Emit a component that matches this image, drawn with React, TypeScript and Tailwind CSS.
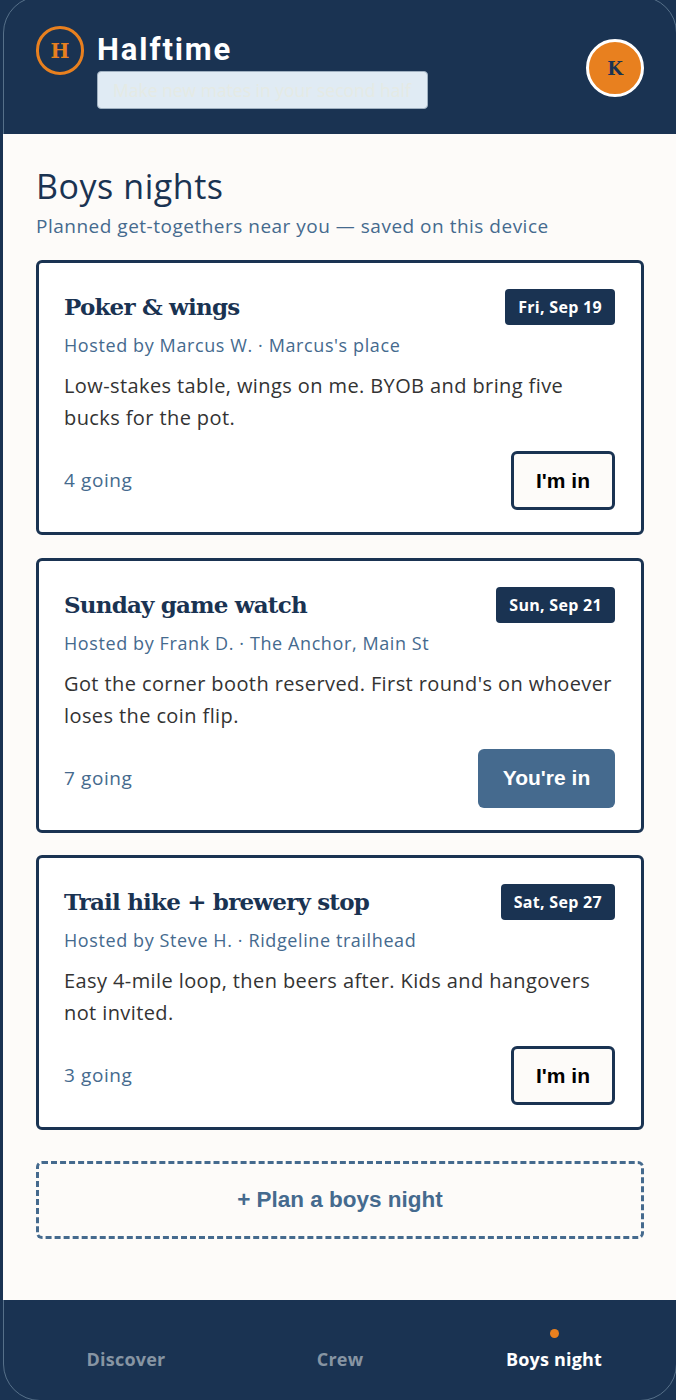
const events = [
  {
    title: "Poker & wings",
    date: "Fri, Sep 19",
    meta: "Hosted by Marcus W. · Marcus's place",
    body: "Low-stakes table, wings on me. BYOB and bring five bucks for the pot.",
    going: "4 going",
    joined: false,
  },
  {
    title: "Sunday game watch",
    date: "Sun, Sep 21",
    meta: "Hosted by Frank D. · The Anchor, Main St",
    body: "Got the corner booth reserved. First round's on whoever loses the coin flip.",
    going: "7 going",
    joined: true,
  },
  {
    title: "Trail hike + brewery stop",
    date: "Sat, Sep 27",
    meta: "Hosted by Steve H. · Ridgeline trailhead",
    body: "Easy 4-mile loop, then beers after. Kids and hangovers not invited.",
    going: "3 going",
    joined: false,
  },
];

function EventCard({ event }: { event: (typeof events)[number] }) {
  return (
    <div className="h-[275px] rounded-md border-[3px] border-[#1a3352] bg-white pt-[26px] pr-[26px] pl-[25px]">
      <div className="flex items-start justify-between">
        <h2 className="font-['DejaVu_Serif'] text-[23px] leading-9 font-bold tracking-[-0.8px] text-[#1a3352]">
          {event.title}
        </h2>
        <span className="rounded bg-[#1a3352] px-[13px] py-[7px] font-['Open_Sans'] text-[16px] leading-[22px] font-bold tracking-[0.3px] text-white">
          {event.date}
        </span>
      </div>
      <p className="mt-[6px] text-[18px] leading-[28px] tracking-[0.6px] text-[#456a8e]">{event.meta}</p>
      <p className="mt-[11px] text-[20px] leading-8 tracking-[0.4px] text-[#333333]">{event.body}</p>
      <div className="mt-[17px] flex items-center justify-between">
        <span className="text-[19px] font-medium tracking-[0.6px] text-[#456a8e]">{event.going}</span>
        {event.joined ? (
          <button className="h-[59px] w-[137px] rounded-md bg-[#456a8e] font-['Liberation_Sans'] text-[21px] font-bold text-white">
            You're in
          </button>
        ) : (
          <button className="h-[59px] w-[104px] rounded-md border-[3px] border-[#1a3352] bg-[#fdfbf9] font-['Liberation_Sans'] text-[21px] font-bold text-black">
            I'm in
          </button>
        )}
      </div>
    </div>
  );
}

export default function App() {
  return (
    <div className="relative flex h-[1400px] w-[676px] flex-col overflow-hidden bg-[#1a3352] pl-[3px] font-['Open_Sans',sans-serif]">
      {/* device outline, only the corners show */}
      <div className="absolute -top-1 -right-px -bottom-px left-[3px] rounded-[37px] border border-[#567089]" />
      <header className="relative -ml-[3px] flex h-[134px] shrink-0 justify-between pr-8 pl-9">
        <div className="flex items-start gap-[13px] pt-[26px]">
          <div className="flex h-[49px] w-[48px] items-center justify-center rounded-full border-[3px] border-[#e8801f] font-['DejaVu_Serif'] text-[20px] font-bold text-[#e8801f]">
            H
          </div>
          <div>
            <h1 className="-mb-[2px] font-['Roboto'] text-[31px] leading-[47px] font-bold tracking-[1.9px] text-white">Halftime</h1>
            <div className="flex h-[38px] w-[331px] items-center truncate rounded border border-[#9fb0c0] bg-[#e0ebf4] pl-[15px] text-[17.5px] text-[#e5eae4]">
              Make new mates in your second half
            </div>
          </div>
        </div>
        <div className="mt-[39px] flex h-[58px] w-[58px] items-center justify-center rounded-full border-[3px] border-white bg-[#e8801f] font-['DejaVu_Serif'] text-[18px] font-bold text-[#1a3352]">
          K
        </div>
      </header>
      <main className="relative flex-1 bg-[#fdfbf9] pt-[29px] pr-8 pl-[33px]">
        <h1 className="text-[34px] leading-[46px] tracking-[0.55px] text-[#1a3352]">Boys nights</h1>
        <p className="mt-[2px] text-[19px] leading-[30px] tracking-[0.5px] text-[#456a8e]">
          Planned get-togethers near you — saved on this device
        </p>
        <div className="mt-[19px] flex flex-col gap-[22.5px]">
          {events.map((event) => (
            <EventCard key={event.title} event={event} />
          ))}
        </div>
        <button className="mt-[31px] h-[78px] w-full rounded-md border-[3px] border-dashed border-[#456a8e] font-['Liberation_Sans'] text-[22.5px] font-bold text-[#456a8e]">
          + Plan a boys night
        </button>
      </main>
      <nav className="relative -ml-[3px] grid h-[100px] shrink-0 grid-cols-3 pr-[15px] pl-[19px]">
        {["Discover", "Crew", "Boys night"].map((label) => {
          const active = label === "Boys night";
          return (
            <div key={label} className="relative flex items-start justify-center pt-[46px]">
              {active && <span className="absolute top-[29px] h-[9px] w-[9px] rounded-full bg-[#e8801f]" />}
              <span className={`text-[18px] leading-[26px] font-bold tracking-[0.2px] ${active ? "text-white" : "text-[#8795a3]"}`}>
                {label}
              </span>
            </div>
          );
        })}
      </nav>
    </div>
  );
}
